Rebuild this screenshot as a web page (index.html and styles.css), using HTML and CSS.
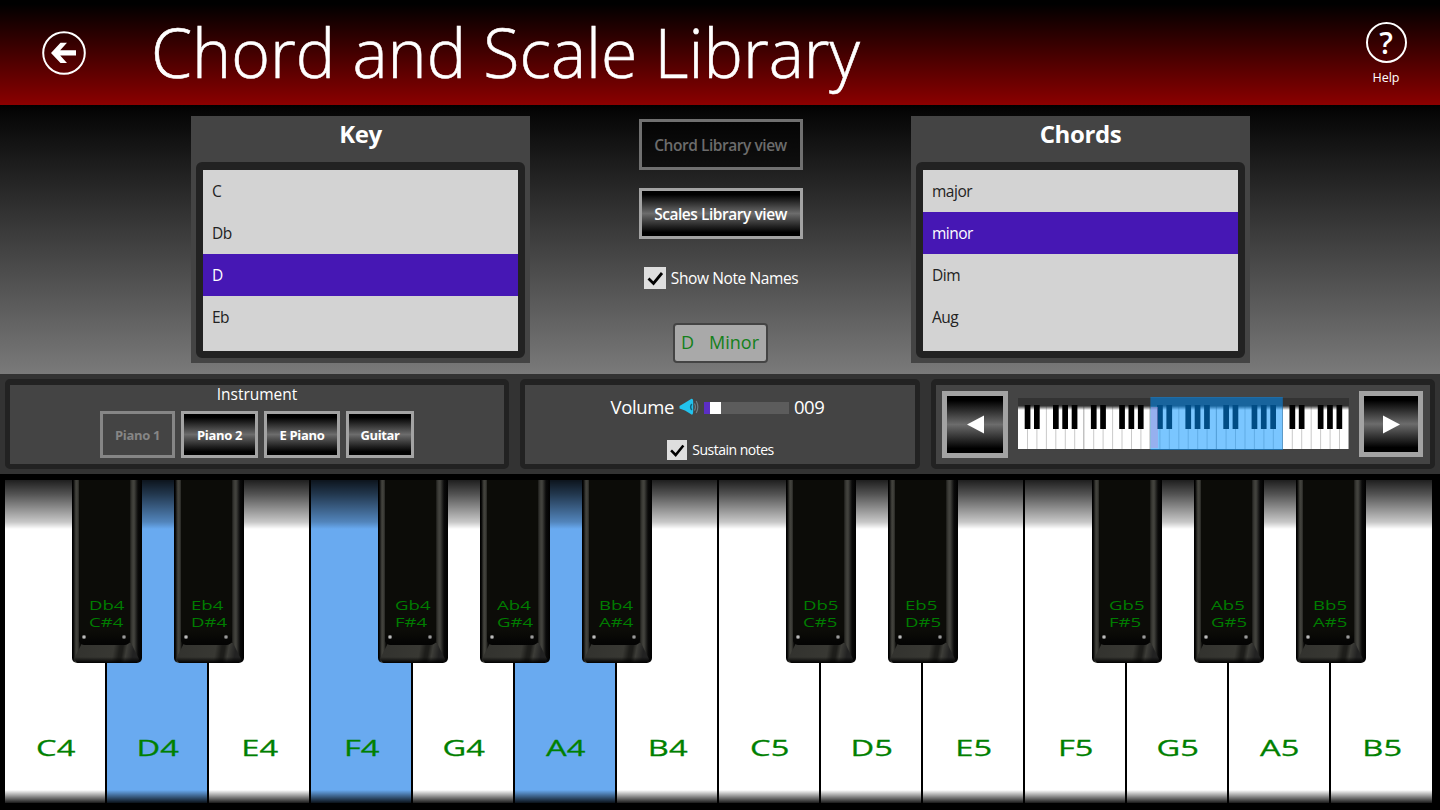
FILE: index.html
```html
<!DOCTYPE html>
<html lang="en">
<head>
    <meta charset="UTF-8">
    <meta name="viewport" content="width=device-width, initial-scale=1.0">
    <title>Chord and Scale Library</title>
    <link rel="stylesheet" href="styles.css">
</head>
<body>
    <header class="header">
        <svg class="back" viewBox="0 0 44 44">
            <circle cx="22" cy="22" r="20.8" fill="none" stroke="#fff" stroke-width="2"/>
            <path d="M9 22 L18.500 11.800 H25 L18.200 19.300 H34 V24.500 H18.200 L25 32 H18.500 Z" fill="#fff"/>
        </svg>
        <h1 class="title"><span>Chord and Scale Library</span></h1>
        <div class="help">
            <div class="help-icon">?</div>
            <div class="help-label">Help</div>
        </div>
    </header>

    <main class="library">
        <section class="picker">
            <h2>Key</h2>
            <ul class="list">
                <li>C</li>
                <li>Db</li>
                <li class="selected">D</li>
                <li>Eb</li>
            </ul>
        </section>

        <div class="views">
            <button class="btn btn-view" disabled>Chord Library view</button>
            <button class="btn btn-view">Scales Library view</button>
            <label class="check">
                <svg class="box" viewBox="0 0 22 22"><path d="M4.500 11.500 L9.500 16.500 L18 6" /></svg>
                <span>Show Note Names</span>
            </label>
            <div class="chord-name"><span>D</span><span>Minor</span></div>
        </div>

        <section class="picker">
            <h2>Chords</h2>
            <ul class="list">
                <li>major</li>
                <li class="selected">minor</li>
                <li>Dim</li>
                <li>Aug</li>
            </ul>
        </section>
    </main>

    <section class="controls">
        <div class="panel instruments">
            <div class="panel-title">Instrument</div>
            <div class="instrument-row">
                <button class="btn w75" disabled>Piano 1</button>
                <button class="btn w77">Piano 2</button>
                <button class="btn w76">E Piano</button>
                <button class="btn w68">Guitar</button>
            </div>
        </div>

        <div class="panel sound">
            <div class="volume">
                <span class="volume-label">Volume</span>
                <svg class="speaker" viewBox="0 0 20 18">
                    <path d="M0.500 8 L6 4.800 L12.500 0.800 Q14.200 0.500 14.200 4 V13 Q14.200 17 12.500 16.600 L6 12.500 L0.500 10.500 Z" fill="#22c3ee"/>
                    <path d="M12.800 6 Q10.500 9 12.800 12" fill="none" stroke="#12657f" stroke-width="1.500"/>
                    <path d="M15.500 5.500 Q17.300 9 15.500 12.500 M17.200 3 Q20.500 9 17.200 15" fill="none" stroke="#6f7f86" stroke-width="1.200"/>
                </svg>
                <div class="slider"><div class="level"></div><div class="thumb"></div></div>
                <span class="volume-value">009</span>
            </div>
            <label class="check small">
                <svg class="box" viewBox="0 0 22 22"><path d="M4.500 11.500 L9.500 16.500 L18 6" /></svg>
                <span>Sustain notes</span>
            </label>
        </div>

        <div class="panel range">
            <button class="btn nav"><svg viewBox="0 0 17 18"><path d="M17 0 V18 L0 9 Z"/></svg></button>
            <svg class="mini" viewBox="0 0 331 54">
                <defs>
                    <linearGradient id="miniTop" x1="0" y1="0" x2="0" y2="1">
                        <stop offset="0" stop-color="#333"/>
                        <stop offset="0.650" stop-color="#333"/>
                        <stop offset="1" stop-color="#333" stop-opacity="0"/>
                    </linearGradient>
                    <g id="octave">
                        <rect width="66.200" height="45" y="7" fill="#fff"/>
                        <path d="M9.500 8 V52 M18.900 8 V52 M28.400 8 V52 M37.800 8 V52 M47.300 8 V52 M56.700 8 V52" stroke="#bbb" stroke-width="0.800"/>
                        <path d="M66 8 V52" stroke="#777" stroke-width="0.900"/>
                    </g>
                    <g id="octaveBlack">
                        <path d="M6.700 8 h5.700 v24 h-5.700 Z M16 8 h5.700 v24 h-5.700 Z M35 8 h5.700 v24 h-5.700 Z M44.300 8 h5.700 v24 h-5.700 Z M53.700 8 h5.700 v24 h-5.700 Z"/>
                    </g>
                </defs>
                <use href="#octave"/>
                <use href="#octave" x="66.200"/>
                <use href="#octave" x="132.400"/>
                <use href="#octave" x="198.600"/>
                <use href="#octave" x="264.800"/>
                <rect width="331" height="12" y="1" fill="url(#miniTop)"/>
                <use href="#octaveBlack"/>
                <use href="#octaveBlack" x="66.200"/>
                <use href="#octaveBlack" x="132.400"/>
                <use href="#octaveBlack" x="198.600"/>
                <use href="#octaveBlack" x="264.800"/>
                <rect x="132.400" width="132.400" height="53" fill="#0092ff" fill-opacity="0.520"/>
                <rect x="133" y="10" width="7" height="41" fill="#c08fd8" fill-opacity="0.400"/>
            </svg>
            <button class="btn nav right"><svg viewBox="0 0 17 18"><path d="M0 0 V18 L17 9 Z"/></svg></button>
        </div>
    </section>

    <section class="keyboard">
        <div class="keys">
            <div class="key"><div class="black"><p>Db4<br>C#4</p></div><span>C4</span></div>
            <div class="key on"><div class="black"><p>Eb4<br>D#4</p></div><span>D4</span></div>
            <div class="key"><span>E4</span></div>
            <div class="key on"><div class="black"><p>Gb4<br>F#4</p></div><span>F4</span></div>
            <div class="key"><div class="black"><p>Ab4<br>G#4</p></div><span>G4</span></div>
            <div class="key on"><div class="black"><p>Bb4<br>A#4</p></div><span>A4</span></div>
            <div class="key"><span>B4</span></div>
            <div class="key"><div class="black"><p>Db5<br>C#5</p></div><span>C5</span></div>
            <div class="key"><div class="black"><p>Eb5<br>D#5</p></div><span>D5</span></div>
            <div class="key"><span>E5</span></div>
            <div class="key"><div class="black"><p>Gb5<br>F#5</p></div><span>F5</span></div>
            <div class="key"><div class="black"><p>Ab5<br>G#5</p></div><span>G5</span></div>
            <div class="key"><div class="black"><p>Bb5<br>A#5</p></div><span>A5</span></div>
            <div class="key"><span>B5</span></div>
        </div>
    </section>
</body>
</html>
```
FILE: styles.css
```css
* {
    box-sizing: border-box;
}
body {
    margin: 0;
    width: 1440px;
    height: 810px;
    overflow: hidden;
    background: #000;
    color: #fff;
    font-family: "Open Sans", "Noto Sans", sans-serif;
    display: flex;
    flex-direction: column;
}
h1, h2, ul, p {
    margin: 0;
    padding: 0;
}

/* header */
.header {
    height: 105px;
    flex: none;
    display: flex;
    background: linear-gradient(#000 4px, #8b0000 105px);
}
.back {
    width: 44px;
    height: 44px;
    margin: 31px 0 0 42px;
}
.title {
    width: 1200px;
    margin-left: 65px;
    font-size: 69px;
    font-weight: 300;
    line-height: 103px;
    white-space: nowrap;
    -webkit-text-stroke: 0.6px #fff;
}
.title span {
    display: inline-block;
    transform: scaleX(0.96);
    transform-origin: left;
}
.help {
    width: 60px;
    margin: 22px 24px 0 auto;
    flex: none;
    text-align: center;
}
.help-icon {
    width: 41px;
    height: 41px;
    margin: 0 auto;
    border: 2px solid #fff;
    border-radius: 50%;
    font-size: 30px;
    font-weight: 600;
    line-height: 37px;
}
.help-label {
    margin-top: 5px;
    font-size: 12.5px;
    line-height: 19px;
}

/* key and chord lists */
.library {
    height: 269px;
    flex: none;
    padding: 11px 190px 0 191px;
    display: flex;
    justify-content: space-between;
    background: linear-gradient(#000, #060606 8px, #7a7a7a);
}
.picker {
    width: 339px;
    height: 247px;
    padding: 0 5px;
    background: #444;
}
.picker h2 {
    height: 46px;
    text-align: center;
    font-size: 24px;
    line-height: 36px;
    letter-spacing: -0.4px;
}
.list {
    height: 196px;
    border: 7px solid #222;
    border-top-width: 8px;
    border-radius: 6px;
    background: #d3d3d3;
    color: #222;
    list-style: none;
    font-size: 15.5px;
    line-height: 42px;
}
.list li {
    height: 42px;
    padding-left: 9px;
    letter-spacing: -0.5px;
}
.list .selected {
    background: #4617b4;
    color: #fff;
}

.btn {
    padding: 0;
    border: 3px solid #a3a3a3;
    background: linear-gradient(#000 8%, #6c6c6c 50%, #000 92%);
    color: #fff;
    font: 700 13px "Open Sans", "Noto Sans", sans-serif;
    letter-spacing: -0.35px;
}
.btn:disabled {
    border-color: #868686;
    background: none;
    color: #868686;
}
.views {
    width: 164px;
    padding-top: 3px;
    display: flex;
    flex-direction: column;
    align-items: center;
}
.btn-view {
    width: 164px;
    height: 51px;
    margin-bottom: 18px;
    padding-top: 1px;
    flex: none;
    font-size: 15.5px;
    font-weight: 600;
    letter-spacing: -0.45px;
}
.btn-view:disabled {
    background: rgba(0, 0, 0, 0.5);
    border-color: #707070;
    color: #6c6c6c;
}
.check {
    display: flex;
    align-items: center;
    gap: 5px;
    font-size: 15.5px;
    letter-spacing: -0.4px;
    white-space: nowrap;
}
.box {
    width: 22px;
    height: 22px;
    background: #dedede;
    flex: none;
}
.box path {
    fill: none;
    stroke: #000;
    stroke-width: 2.8;
}
.views .check {
    height: 22px;
    margin-top: 10px;
    padding-left: 1px;
}
.chord-name {
    width: 95px;
    height: 40px;
    margin-top: 34px;
    margin-right: 1px;
    border: 2px solid #444;
    border-radius: 4px;
    background: #a9a9a9;
    color: #14801a;
    display: flex;
    justify-content: center;
    gap: 15px;
    font-size: 18px;
    line-height: 35px;
}

/* control strip */
.controls {
    height: 100px;
    flex: none;
    padding: 5px 5px 5px;
    display: flex;
    background: #333;
}
.panel {
    height: 90px;
    border: 5px solid #222;
    border-width: 6px 5px 5px;
    border-radius: 5px;
    background: #444;
}
.instruments {
    width: 504px;
    margin-right: 11px;
}
.panel-title {
    text-align: center;
    font-size: 15.5px;
    line-height: 18px;
}
.instrument-row {
    display: flex;
    justify-content: center;
    gap: 6px;
    margin-top: 8px;
}
.instrument-row .btn {
    height: 47px;
    padding-top: 1px;
}
.w75 { width: 75px; }
.w77 { width: 77px; }
.w76 { width: 76px; }
.w68 { width: 68px; }

.sound {
    width: 400px;
    margin-right: 11px;
    display: flex;
    flex-direction: column;
    align-items: center;
}
.volume {
    height: 43px;
    display: flex;
    align-items: center;
    padding-right: 5px;
    font-size: 18.5px;
    letter-spacing: -0.4px;
}
.volume span {
    margin-top: -1px;
}
.speaker {
    width: 20px;
    height: 18px;
    margin: 0 5px;
}
.slider {
    width: 85px;
    height: 12px;
    margin: 2px 5px 0 0;
    display: flex;
    background: #5c5c5c;
}
.level {
    width: 6px;
    background: #5b2ec5;
}
.thumb {
    width: 11px;
    background: #fff;
}
.check.small {
    margin-top: 12px;
    padding-left: 1px;
    font-size: 14px;
    letter-spacing: -0.5px;
    height: 20px;
}
.small span {
    margin-top: -2px;
}
.small .box {
    width: 20px;
    height: 20px;
}

.range {
    width: 504px;
    padding: 6px 7px 6px 6px;
    display: flex;
    justify-content: space-between;
}
.nav {
    width: 66px;
    height: 67px;
    border-width: 5px;
    display: flex;
    align-items: center;
    justify-content: center;
}
.nav svg {
    width: 17px;
    height: 19px;
    fill: #fff;
}
.nav.right {
    width: 64px;
    height: 66px;
}
.mini {
    width: 331px;
    height: 54px;
    margin: 6px 1px 0 0;
}

/* piano */
.keyboard {
    flex: 1;
    padding: 6px 7px 7px 5px;
    background: #000;
}
.keys {
    height: 323px;
    display: flex;
}
.key {
    position: relative;
    width: 102px;
    border-right: 2px solid #000;
    background: linear-gradient(rgba(0, 0, 0, 0.88), rgba(0, 0, 0, 0.68) 14px, rgba(0, 0, 0, 0.22) 42px, rgba(0, 0, 0, 0) 49px, rgba(0, 0, 0, 0) 310px, rgba(0, 0, 0, 0.9)), #fff;
    color: #008000;
}
.key:last-child {
    border-right-width: 1px;
}
.key.on {
    background-color: #69aaf0;
}
.key span {
    display: block;
    margin-top: 253px;
    padding-left: 1px;
    text-align: center;
    font-size: 22.5px;
    line-height: 30px;
    transform: scaleX(1.45);
    -webkit-text-stroke: 0.3px #008000;
}
.black {
    position: absolute;
    z-index: 1;
    left: 67px;
    top: 0;
    width: 70px;
    height: 183px;
    border-radius: 0 0 5px 5px;
    background: linear-gradient(90deg, #000 1px, #44443e 4px, #3a3a35 6px, #0a0a08 8px, #0a0a08 57px, #3b3b36 60px, #44443f 62px, #0a0a0a 66px, #000);
}
/* sloped front edge of the black key */
.black::before {
    content: "";
    position: absolute;
    left: 1px;
    right: 1px;
    bottom: 0;
    height: 26px;
    border-radius: 0 0 5px 5px;
    background:
        linear-gradient(transparent 20px, #000 26px),
        linear-gradient(100deg, #33332f 8px, #383833 42px, #1d1d1a 48px, #1d1d1a 51px, #3d3d38 55px, #222 62px);
    clip-path: polygon(9px 6px, 58px 6px, 66px 22px, 64px 100%, 4px 100%, 1px 22px);
}
/* two glints at the corners of the key top */
.black::after {
    content: "";
    position: absolute;
    left: 7px;
    top: 0;
    width: 51px;
    height: 165px;
    border-radius: 0 0 5px 5px;
    background:
        radial-gradient(circle at 5px 157px, #bbb 1px, transparent 2.5px),
        radial-gradient(circle at 45px 157px, #999 1px, transparent 2.5px),
        linear-gradient(#0c0c08 150px, #030303);
}
.black p {
    position: relative;
    z-index: 1;
    width: 70px;
    margin-top: 117px;
    padding-left: 17px;
    font-size: 13px;
    line-height: 17px;
    transform: scaleX(1.43);
    transform-origin: 17px 0;
    color: #007c00;
}
```
